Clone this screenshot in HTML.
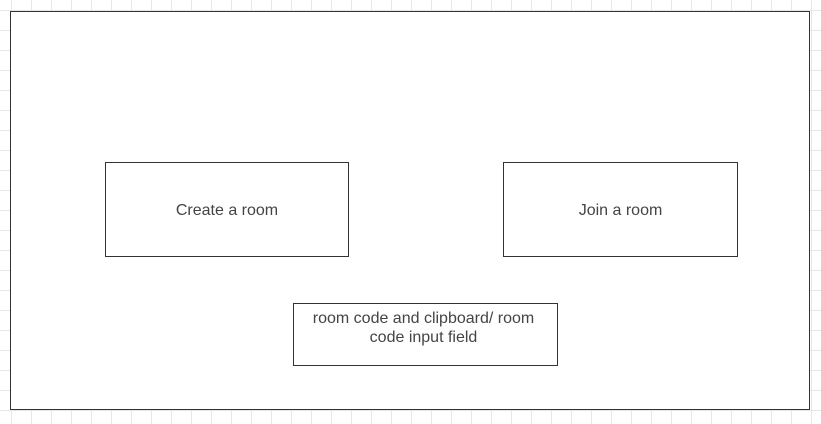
<!DOCTYPE html>
<html><head><style>
html,body{margin:0;padding:0;}
body{width:821px;height:424px;position:relative;overflow:hidden;background:#fff;
background-image:linear-gradient(to right,#e6e6e6 1px,transparent 1px),linear-gradient(to bottom,#e6e6e6 1px,transparent 1px);
background-size:20px 20px;background-position:11px 10px;font-family:"Liberation Sans",sans-serif;color:#444;}
.b{position:absolute;border:1px solid #333;background:#fff;box-sizing:border-box;display:flex;align-items:center;justify-content:center;text-align:center;font-size:16px;line-height:19px;}
</style></head><body>
<div class="b" style="left:10px;top:11px;width:800px;height:399px;"></div>
<div class="b" style="left:105px;top:162px;width:244px;height:95px;padding-top:2px;">Create a room</div>
<div class="b" style="left:503px;top:162px;width:235px;height:95px;padding-top:2px;">Join a room</div>
<div class="b" style="left:293px;top:303px;width:265px;height:63px;align-items:flex-start;padding-top:5px;padding-right:4px;"><div style="width:245px">room code and clipboard/ room code input field</div></div>
</body></html>
